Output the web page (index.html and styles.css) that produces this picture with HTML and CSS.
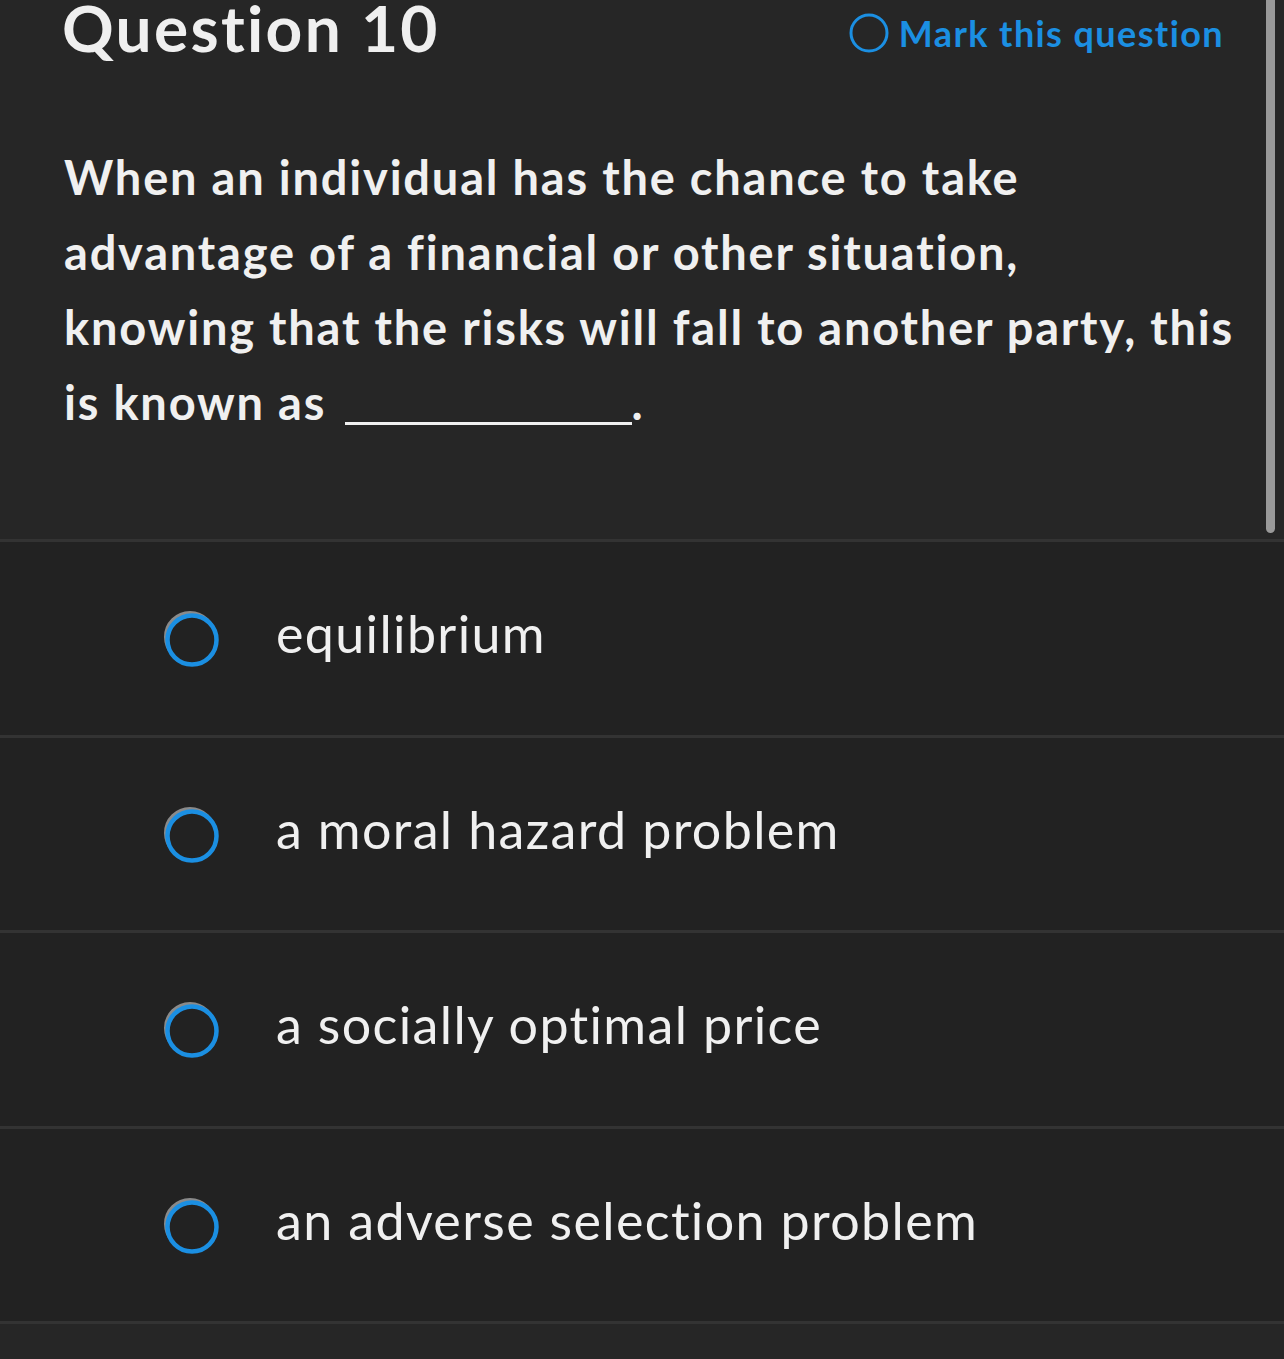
FILE: index.html
```html
<!DOCTYPE html>
<html lang="en">
<head>
<meta charset="utf-8">
<title>Question 10</title>
<link rel="stylesheet" href="styles.css">
</head>
<body>
<div class="page">
  <header class="header">
    <h1 class="title">Question 10</h1>
    <div class="mark">
      <svg class="mark-icon" width="40" height="40" viewBox="0 0 40 40"><circle cx="20" cy="20" r="18" fill="none" stroke="#1b8fe2" stroke-width="3"/></svg>
      <span class="mark-text">Mark this question</span>
    </div>
  </header>
  <p class="question">When an individual has the chance to take<br>advantage of a financial or other situation,<br>knowing that the risks will fall to another party, this<br>is known as <span class="blank"></span>.</p>
  <ul class="answers">
    <li class="answer">
      <svg class="radio" width="58" height="58" viewBox="0 0 58 58"><circle cx="27" cy="26" r="24" fill="none" stroke="#8a8a8a" stroke-width="4"/><circle cx="29" cy="29" r="24.5" fill="#222222" stroke="#1b8fe2" stroke-width="4.5"/></svg>
      <span class="answer-text">equilibrium</span>
    </li>
    <li class="answer">
      <svg class="radio" width="58" height="58" viewBox="0 0 58 58"><circle cx="27" cy="26" r="24" fill="none" stroke="#8a8a8a" stroke-width="4"/><circle cx="29" cy="29" r="24.5" fill="#222222" stroke="#1b8fe2" stroke-width="4.5"/></svg>
      <span class="answer-text">a moral hazard problem</span>
    </li>
    <li class="answer">
      <svg class="radio" width="58" height="58" viewBox="0 0 58 58"><circle cx="27" cy="26" r="24" fill="none" stroke="#8a8a8a" stroke-width="4"/><circle cx="29" cy="29" r="24.5" fill="#222222" stroke="#1b8fe2" stroke-width="4.5"/></svg>
      <span class="answer-text">a socially optimal price</span>
    </li>
    <li class="answer">
      <svg class="radio" width="58" height="58" viewBox="0 0 58 58"><circle cx="27" cy="26" r="24" fill="none" stroke="#8a8a8a" stroke-width="4"/><circle cx="29" cy="29" r="24.5" fill="#222222" stroke="#1b8fe2" stroke-width="4.5"/></svg>
      <span class="answer-text">an adverse selection problem</span>
    </li>
  </ul>
  <div class="scrollbar"></div>
</div>
</body>
</html>
```

FILE: styles.css
```css
html, body {
  margin: 0;
  padding: 0;
  background: #262626;
}

body {
  font-family: "Lato", "Liberation Sans", sans-serif;
  color: #f0f0f0;
  font-variant-ligatures: none;
  font-feature-settings: "liga" 0, "clig" 0;
}

.page {
  position: relative;
  width: 1284px;
  min-height: 1359px;
}

.header {
  display: flex;
  justify-content: space-between;
  align-items: flex-start;
  padding: 2px 62px 0 62px;
  height: 54px;
}

.title {
  margin: 0;
  font-size: 64px;
  line-height: 52px;
  font-weight: 700;
  color: #efefef;
  letter-spacing: 2.3px;
}

.mark {
  display: flex;
  align-items: center;
  gap: 10px;
  margin-top: 9px;
  margin-right: -2px;
}

.mark-icon {
  display: block;
  margin-left: -6px;
}

.mark-text {
  font-size: 36px;
  line-height: 44px;
  font-weight: 700;
  color: #1b8fe2;
  letter-spacing: 1.4px;
}

.question {
  margin: 84px 0 0 0;
  padding: 0 20px 99px 64px;
  font-size: 47px;
  line-height: 75px;
  font-weight: 700;
  color: #f0f0f0;
  letter-spacing: 1.8px;
  white-space: nowrap;
}

.blank {
  display: inline-block;
  width: 287px;
  height: 3px;
  background: #f0f0f0;
  vertical-align: -5px;
  margin-left: 6px;
  margin-right: -1px;
}

.answers {
  list-style: none;
  margin: 0;
  padding: 0;
  background: #222222;
  border-top: 3px solid #333333;
}

.answer {
  display: flex;
  align-items: center;
  height: 192.5px;
  padding-left: 163px;
  border-bottom: 3px solid #333333;
  background: #222222;
}

.radio {
  display: block;
  flex: none;
  margin-top: 4px;
}

.answer-text {
  margin-left: 55px;
  margin-bottom: 10px;
  font-size: 52px;
  font-weight: 400;
  color: #f0f0f0;
  letter-spacing: 1.35px;
}

.scrollbar {
  position: absolute;
  top: 0;
  left: 1266px;
  width: 9px;
  height: 533px;
  background: #999999;
  border-radius: 0 0 5px 5px;
}
```
